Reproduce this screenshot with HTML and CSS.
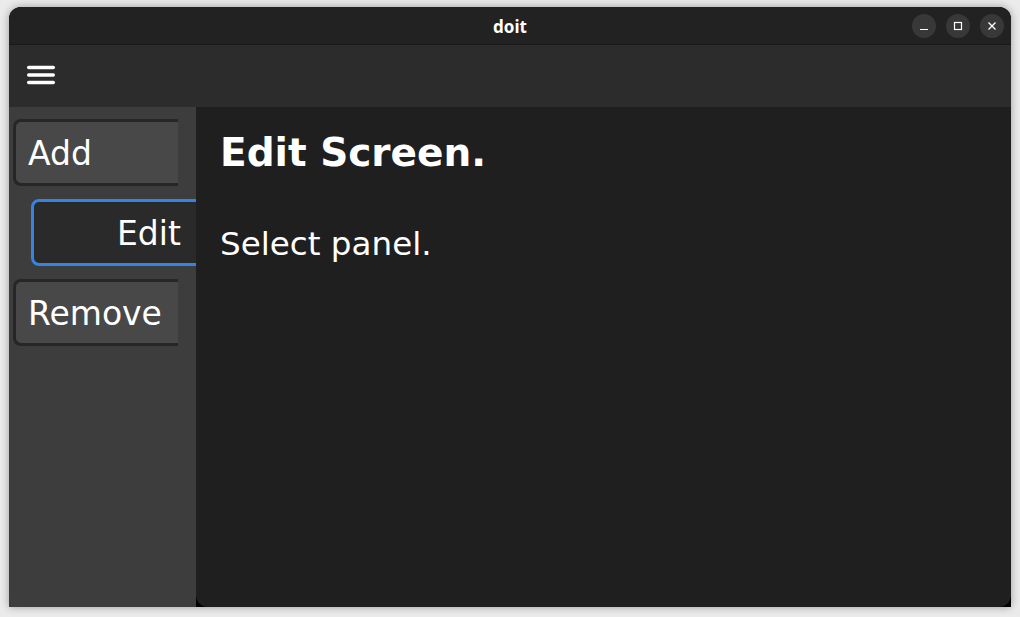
FILE: index.html
```html
<!DOCTYPE html>
<html>
<head>
<meta charset="utf-8">
<link rel="stylesheet" href="styles.css">
</head>
<body>
<div class="window">
  <div class="titlebar">
    <div class="title">doit</div>
    <div class="controls">
      <div class="ctl"><svg width="24" height="24" viewBox="0 0 24 24"><line x1="8" y1="15.5" x2="16" y2="15.5" stroke="#fff" stroke-width="1.2"/></svg></div>
      <div class="ctl"><svg width="24" height="24" viewBox="0 0 24 24"><rect x="8.5" y="8.5" width="7" height="7" fill="none" stroke="#fff" stroke-width="1.2"/></svg></div>
      <div class="ctl"><svg width="24" height="24" viewBox="0 0 24 24"><path d="M8.5 8.5 L15.5 15.5 M15.5 8.5 L8.5 15.5" stroke="#fff" stroke-width="1.3"/></svg></div>
    </div>
  </div>
  <div class="header">
    <svg class="menu" width="30" height="22" viewBox="0 0 30 22"><g stroke="#fff" stroke-width="3.4" stroke-linecap="round"><line x1="2.7" y1="2.5" x2="27.3" y2="2.5"/><line x1="2.7" y1="10" x2="27.3" y2="10"/><line x1="2.7" y1="17.5" x2="27.3" y2="17.5"/></g></svg>
  </div>
  <div class="body">
    <div class="sidebar">
      <div class="btn">Add</div>
      <div class="btn active">Edit</div>
      <div class="btn">Remove</div>
    </div>
    <div class="main">
      <h1 class="heading">Edit Screen.</h1>
      <p class="text">Select panel.</p>
    </div>
  </div>
</div>
</body>
</html>
```

FILE: styles.css
```css
html, body {
  margin: 0;
  padding: 0;
}
body {
  background: #ebebeb;
  width: 1020px;
  height: 617px;
  overflow: hidden;
  font-family: "DejaVu Sans", sans-serif;
}
.window {
  margin: 7px 0 0 9px;
  width: 1002px;
  height: 600px;
  border-radius: 12px 12px 0 0;
  overflow: hidden;
  background: #000;
  box-shadow: 0 0 8px rgba(0,0,0,0.35);
  display: flex;
  flex-direction: column;
}
.titlebar {
  height: 37px;
  flex: none;
  background: #222222;
  border-bottom: 1px solid #191919;
  position: relative;
  display: flex;
  align-items: center;
  justify-content: flex-end;
  padding-right: 7px;
}
.title {
  position: absolute;
  left: 0;
  right: 0;
  top: 0;
  bottom: 0;
  display: flex;
  align-items: center;
  justify-content: center;
  color: #fff;
  font-family: "Noto Sans", sans-serif;
  font-weight: bold;
  font-size: 17px;
  padding-top: 1px;
}
.controls {
  display: flex;
  gap: 10px;
  position: relative;
  margin-top: 1px;
}
.ctl {
  width: 24px;
  height: 24px;
  border-radius: 50%;
  background: #383838;
  display: flex;
}
.header {
  height: 62px;
  flex: none;
  background: #2c2c2c;
  display: flex;
  align-items: center;
  padding-left: 17px;
}
.menu {
  display: block;
  margin-top: 0px;
}
.body {
  flex: 1;
  display: flex;
  min-height: 0;
}
.sidebar {
  width: 187px;
  flex: none;
  background: #3d3d3d;
  overflow: hidden;
  padding-top: 12px;
  display: flex;
  flex-direction: column;
  gap: 13px;
}
.btn {
  box-sizing: border-box;
  height: 67px;
  width: 165px;
  margin-left: 4px;
  border: 3px solid #262626;
  border-right: none;
  border-radius: 8px 0 0 8px;
  background: #484848;
  color: #fff;
  font-size: 33px;
  display: flex;
  align-items: center;
  padding-left: 12px;
  padding-top: 1px;
  white-space: nowrap;
  flex: none;
}
.btn.active {
  margin-left: 22px;
  width: 200px;
  border: 3px solid #3584e4;
  border-radius: 8px;
  background: #2a2a2a;
  padding-left: 83px;
}
.main {
  flex: 1;
  background: #1f1f1f;
  border-radius: 0 0 12px 12px;
  padding: 22px 22px 0 24px;
  color: #fff;
}
.heading {
  margin: 0;
  font-size: 39px;
  line-height: 48px;
  font-weight: bold;
}
.text {
  margin: 47px 0 0 0;
  font-size: 32.6px;
  line-height: 40px;
}
```
